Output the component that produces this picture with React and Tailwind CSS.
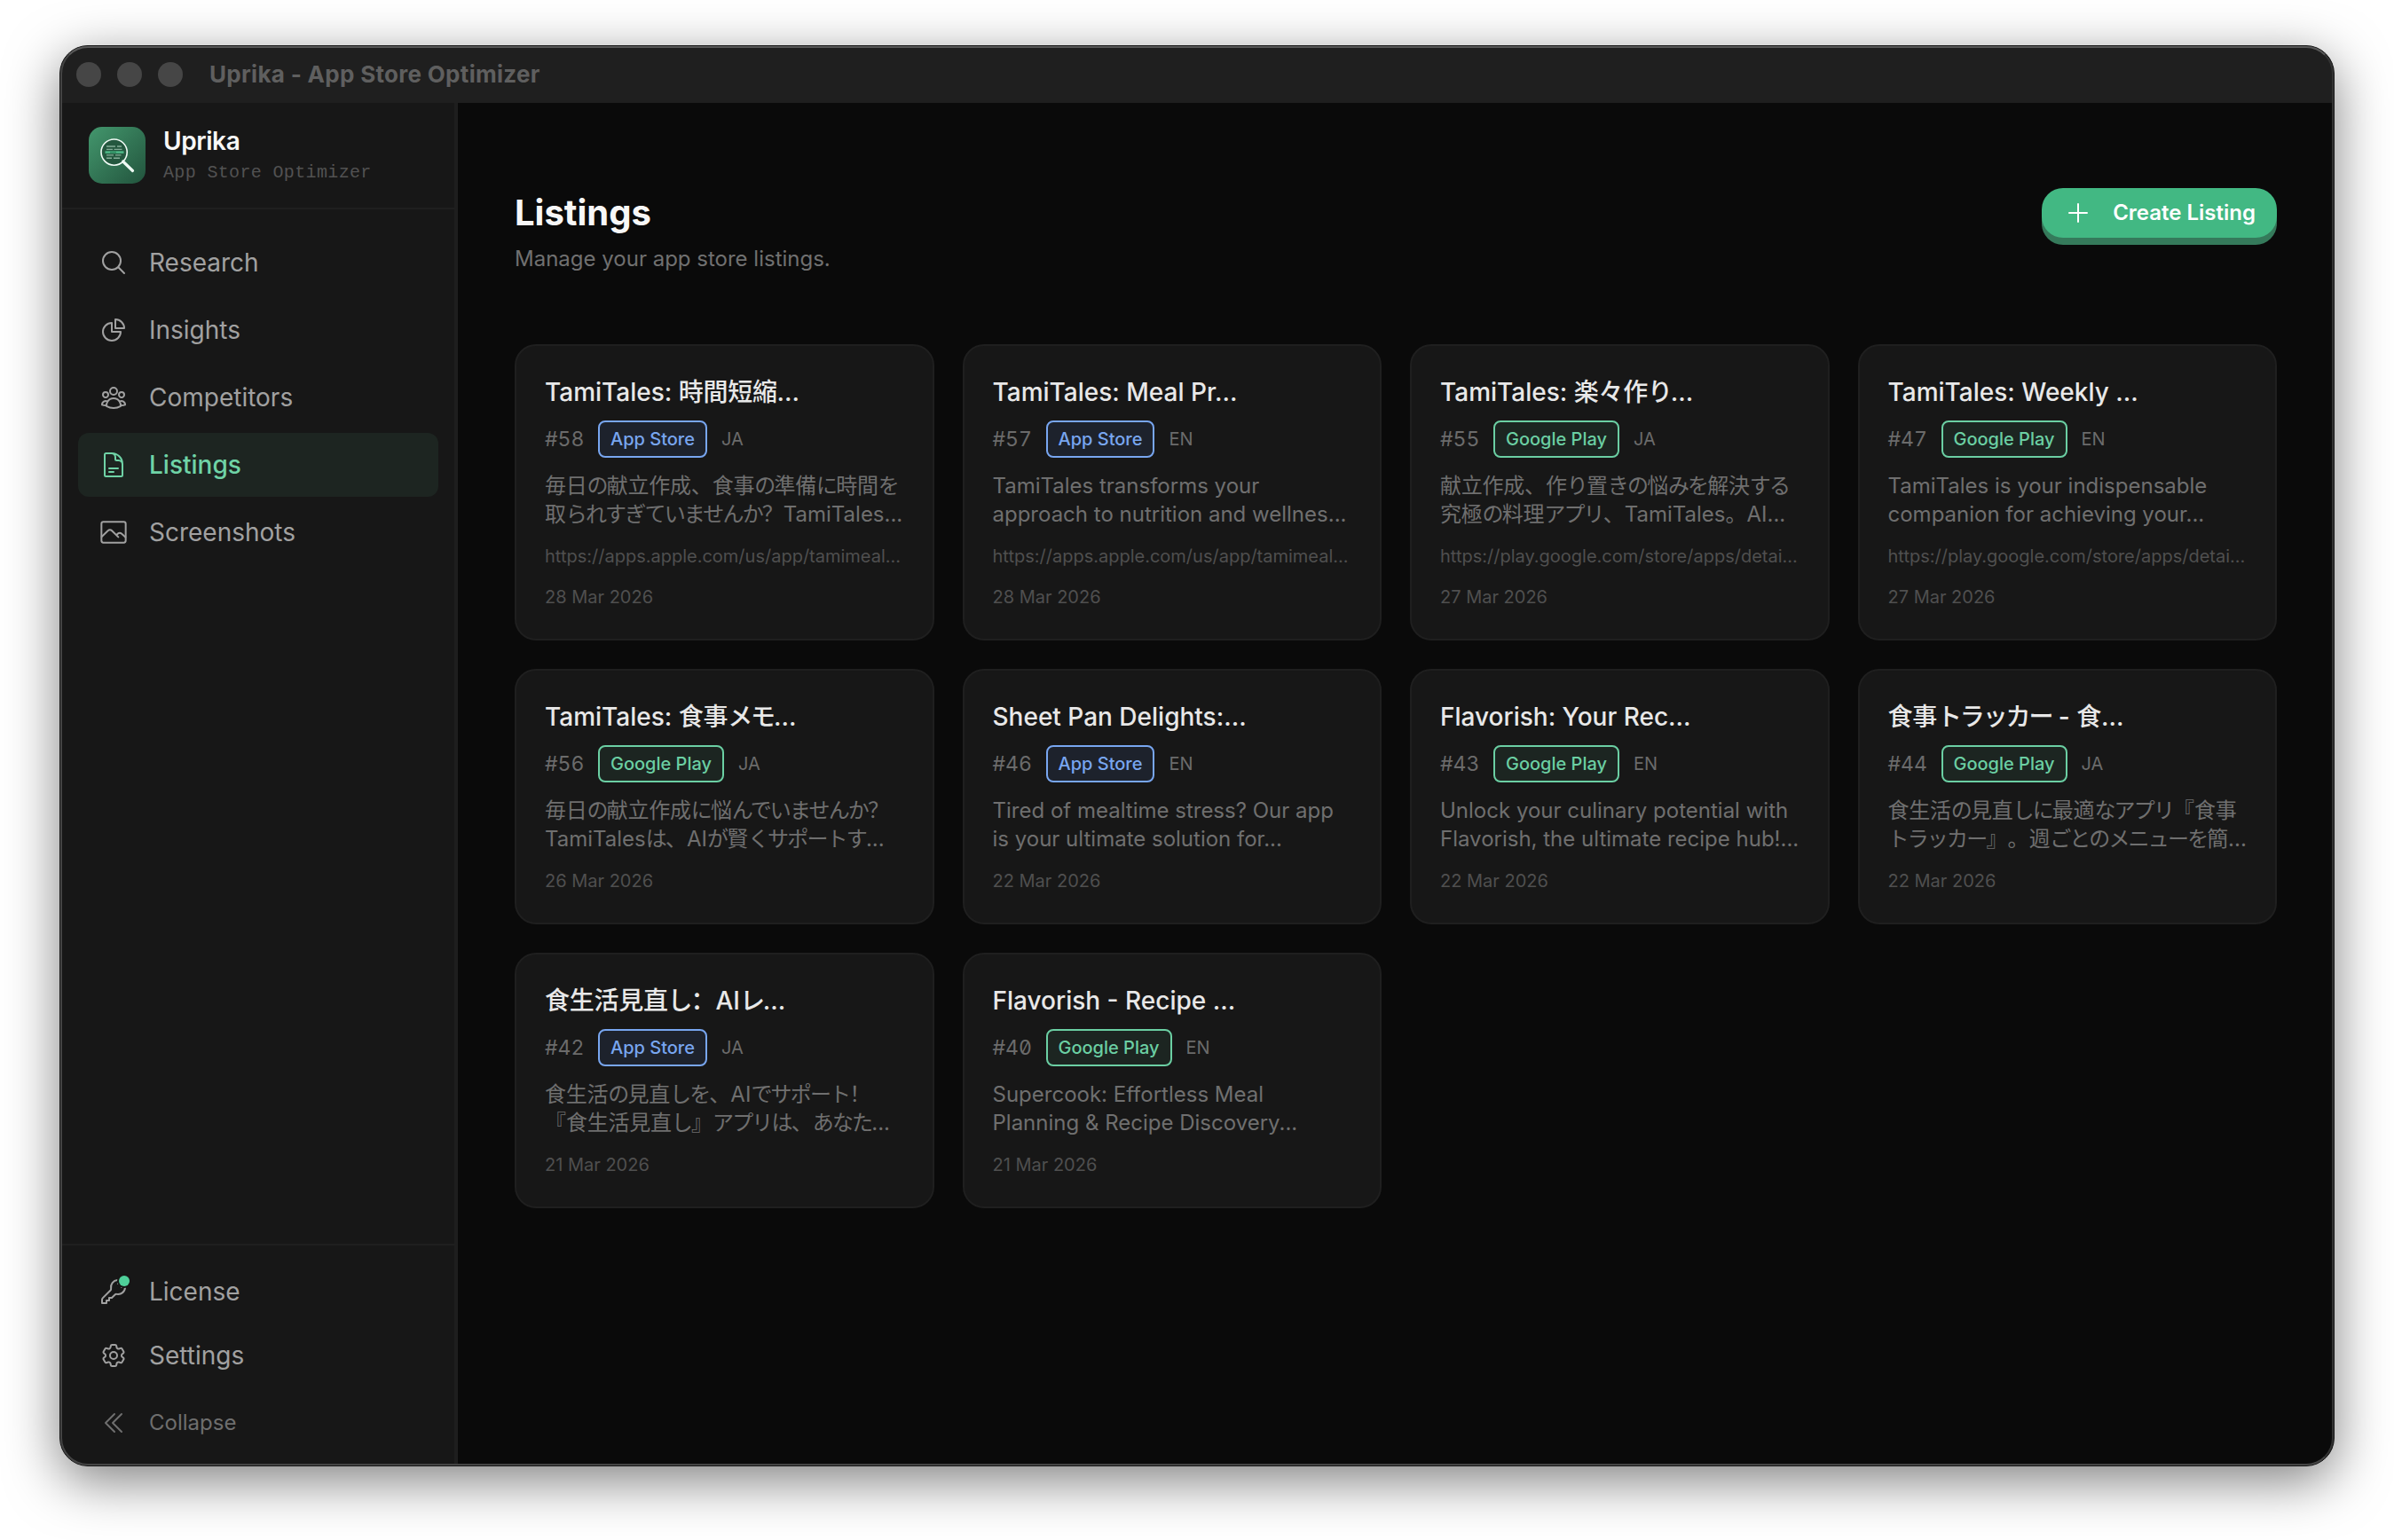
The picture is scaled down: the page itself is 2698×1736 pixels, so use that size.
import {
  HiOutlineMagnifyingGlass,
  HiOutlineChartPie,
  HiOutlineUserGroup,
  HiOutlineDocumentText,
  HiOutlineKey,
  HiOutlineCog6Tooth,
  HiOutlineChevronDoubleLeft,
  HiOutlinePlus,
} from "react-icons/hi2";

const RUNS = /[\u3041-\u3096\u30a1-\u30fc]+|[\u3400-\u9fff\u3005]+|[^\u3041-\u3096\u30a1-\u30fc\u3400-\u9fff\u3005]+/g;

/* Sets kana tighter than ideographs; other characters keep their natural spacing. */
function Text({ children }) {
  return children.match(RUNS).map((run, i) => {
    if (/^[\u3041-\u30fc]/.test(run)) {
      return (
        <span key={i} className="tracking-[-0.076em]">
          {run}
        </span>
      );
    }
    if (/^[\u3400-\u9fff\u3005]/.test(run)) {
      return (
        <span key={i} className="tracking-[-0.01em]">
          {run}
        </span>
      );
    }
    return run;
  });
}

function PhotoIcon({ className }) {
  return (
    <svg
      className={className}
      viewBox="0 0 24 24"
      fill="none"
      stroke="currentColor"
      strokeWidth="1.5"
      strokeLinecap="round"
      strokeLinejoin="round"
    >
      <rect x="1.75" y="3.25" width="20.5" height="17.5" rx="1.6" />
      <path d="m2 15.75 5.4-5.2a2.1 2.1 0 0 1 3 0l5.6 5.5m-1.6-1.6 1.3-1.3a2.1 2.1 0 0 1 3 0l3.3 3" />
    </svg>
  );
}

function Logo() {
  return (
    <svg className="size-16 shrink-0" viewBox="0 0 64 64" fill="none">
      <defs>
        <linearGradient id="logo-bg" x1="0" y1="0" x2="64" y2="64" gradientUnits="userSpaceOnUse">
          <stop stopColor="#43976d" />
          <stop offset="1" stopColor="#22543d" />
        </linearGradient>
      </defs>
      <rect width="64" height="64" rx="15" fill="url(#logo-bg)" />
      <circle cx="28.6" cy="28.6" r="14.6" fill="#24583f" stroke="#effaf4" strokeWidth="1.6" />
      <path d="M38.6 39 49.5 49.5" stroke="#effaf4" strokeWidth="3.2" strokeLinecap="round" />
      <g stroke="#84ad98" strokeWidth="1.4">
        <path d="M20 22h10M32 22h5M20 25.4h7M28.5 25.4h9M20 31.9h8M30 31.9h6.5M20 35.2h6M28 35.2h7" />
      </g>
      <path d="M18.5 28.6h21" stroke="#4bb383" strokeWidth="2.6" />
      <path d="M24 28.6h7" stroke="#2f8a60" strokeWidth="1.6" />
    </svg>
  );
}

const NAV = [
  { label: "Research", Icon: HiOutlineMagnifyingGlass },
  { label: "Insights", Icon: HiOutlineChartPie },
  { label: "Competitors", Icon: HiOutlineUserGroup },
  { label: "Listings", Icon: HiOutlineDocumentText, active: true },
  { label: "Screenshots", Icon: PhotoIcon },
];

const APPLE_URL = "https://apps.apple.com/us/app/tamimeal...";
const PLAY_URL = "https://play.google.com/store/apps/detai...";

const LISTINGS = [
  { title: "TamiTales: 時間短縮...", id: "#58", store: "App Store", lang: "JA", lines: ["毎日の献立作成、食事の準備に時間を", "取られすぎていませんか？TamiTales..."], url: APPLE_URL, date: "28 Mar 2026" },
  { title: "TamiTales: Meal Pr...", id: "#57", store: "App Store", lang: "EN", lines: ["TamiTales transforms your", "approach to nutrition and wellnes..."], url: APPLE_URL, date: "28 Mar 2026" },
  { title: "TamiTales: 楽々作り...", id: "#55", store: "Google Play", lang: "JA", lines: ["献立作成、作り置きの悩みを解決する", "究極の料理アプリ、TamiTales。AI..."], url: PLAY_URL, date: "27 Mar 2026" },
  { title: "TamiTales: Weekly ...", id: "#47", store: "Google Play", lang: "EN", lines: ["TamiTales is your indispensable", "companion for achieving your..."], url: PLAY_URL, date: "27 Mar 2026" },
  { title: "TamiTales: 食事メモ...", id: "#56", store: "Google Play", lang: "JA", lines: ["毎日の献立作成に悩んでいませんか？", "TamiTalesは、AIが賢くサポートす..."], date: "26 Mar 2026" },
  { title: "Sheet Pan Delights:...", id: "#46", store: "App Store", lang: "EN", lines: ["Tired of mealtime stress? Our app", "is your ultimate solution for..."], date: "22 Mar 2026" },
  { title: "Flavorish: Your Rec...", id: "#43", store: "Google Play", lang: "EN", lines: ["Unlock your culinary potential with", "Flavorish, the ultimate recipe hub!..."], date: "22 Mar 2026" },
  { title: "食事トラッカー - 食...", id: "#44", store: "Google Play", lang: "JA", lines: ["食生活の見直しに最適なアプリ『食事", "トラッカー』。週ごとのメニューを簡..."], date: "22 Mar 2026" },
  { title: "食生活見直し：AIレ...", id: "#42", store: "App Store", lang: "JA", lines: ["食生活の見直しを、AIでサポート！", "『食生活見直し』アプリは、あなた..."], date: "21 Mar 2026" },
  { title: "Flavorish - Recipe ...", id: "#40", store: "Google Play", lang: "EN", lines: ["Supercook: Effortless Meal", "Planning & Recipe Discovery..."], date: "21 Mar 2026" },
];

const BADGE = {
  "App Store": "border-[#78a6f0] bg-[#1d222c] text-[#78a6f0]",
  "Google Play": "border-[#6bcfa3] bg-[#1c2521] text-[#6bcfa3]",
};

function TitleBar() {
  return (
    <header className="flex h-16 shrink-0 items-center bg-[#1f1f1f] pl-[18px]">
      <div className="flex gap-[18px]">
        <span className="size-7 rounded-full bg-[#464646]" />
        <span className="size-7 rounded-full bg-[#464646]" />
        <span className="size-7 rounded-full bg-[#464646]" />
      </div>
      <span className="ml-[30px] pb-0.5 text-[26px] font-bold tracking-[0.3px] text-[#5f5f5f]">
        Uprika - App Store Optimizer
      </span>
    </header>
  );
}

function NavItem({ label, Icon, active, dot }) {
  return (
    <a
      className={
        "flex h-[72px] items-center gap-6 rounded-xl px-6 text-[28px] " +
        (active ? "bg-[#1d2521] font-medium text-[#6fd3a6]" : "text-[#a1a1a1]")
      }
    >
      <span className="relative size-8 shrink-0">
        <Icon className="size-8" />
        {dot && (
          <span className="absolute -top-0.5 -right-0.5 size-3 rounded-full bg-[#4fd09a] ring-2 ring-[#171717]" />
        )}
      </span>
      {label}
    </a>
  );
}

function Sidebar() {
  return (
    <aside className="flex w-[448px] shrink-0 flex-col border-r-4 border-[#1e1e1e] bg-[#171717]">
      <div className="flex h-[120px] shrink-0 items-center gap-5 border-b-2 border-[#1f1f1f] pl-8">
        <Logo />
        <div className="flex flex-col">
          <span className="text-[28px] leading-[38px] font-semibold tracking-[-0.015em] text-[#f7f7f7]">
            Uprika
          </span>
          <span className="pt-0.5 font-['Liberation_Mono',monospace] text-[20px] leading-[30px] tracking-[0.35px] text-[#525252]">
            App Store Optimizer
          </span>
        </div>
      </div>
      <nav className="flex flex-1 flex-col gap-1 pt-6 pr-[18px] pl-5">
        {NAV.map((item) => (
          <NavItem key={item.label} {...item} />
        ))}
      </nav>
      <div className="flex h-[250px] shrink-0 flex-col border-t-2 border-[#1f1f1f] pt-4 pr-[18px] pl-5">
        <NavItem label="License" Icon={HiOutlineKey} dot />
        <NavItem label="Settings" Icon={HiOutlineCog6Tooth} />
        <button className="mt-1 flex h-[72px] items-center gap-6 px-6 text-2xl text-[#6e6e6e]">
          <HiOutlineChevronDoubleLeft className="size-8" />
          Collapse
        </button>
      </div>
    </aside>
  );
}

function ListingCard({ title, id, store, lang, lines, url, date }) {
  return (
    <article className="flex flex-col rounded-3xl border-2 border-[#1f1f1f] bg-[#171717] p-8 whitespace-nowrap [text-spacing-trim:space-all]">
      <h2 className="text-[28px] leading-10 font-medium text-[#e8e8e8]">
        <Text>{title}</Text>
      </h2>
      <div className="mt-3 flex h-[42px] items-center gap-4 text-[20px] text-[#6b6b6b]">
        <span className="w-11 text-[23px] [font-feature-settings:'tnum','zero']">{id}</span>
        <span
          className={
            "flex h-full items-center rounded-lg border-2 px-3 font-medium " + BADGE[store]
          }
        >
          {store}
        </span>
        <span>{lang}</span>
      </div>
      <div className="mt-4 text-2xl leading-8 text-[#6f6f6f]">
        {lines.map((line) => (
          <p key={line}>
            <Text>{line}</Text>
          </p>
        ))}
      </div>
      {url && <p className="mt-4 text-[20px] leading-[30px] text-[#4f4f4f]">{url}</p>}
      <p className="mt-4 text-[20px] leading-[30px] text-[#4f4f4f]">{date}</p>
    </article>
  );
}

export default function App() {
  return (
    <div className="h-[1736px] w-[2698px] overflow-hidden bg-white pt-[51px] pl-[67px] font-['Inter','Noto_Sans_CJK_SC',sans-serif] text-white">
      <div className="relative h-[1602px] w-[2564px] rounded-[32px] shadow-[0_16px_60px_rgba(0,0,0,0.5)]">
        <div className="flex h-full flex-col overflow-hidden rounded-[32px] border border-[#161616] bg-[#0a0a0a]">
          <TitleBar />
          <div className="flex min-h-0 flex-1">
            <Sidebar />
            <main className="flex-1 bg-[#0a0a0a] pt-24 pr-16 pl-16">
              <div className="flex items-start justify-between">
                <div>
                  <h1 className="text-[40px] leading-[56px] font-bold text-[#f7f7f7]">Listings</h1>
                  <p className="mt-2 text-2xl leading-8 text-[#707070]">
                    Manage your app store listings.
                  </p>
                </div>
                <button className="flex h-14 items-center gap-[23px] rounded-3xl bg-[#42b883] pr-6 pl-[25px] text-2xl font-semibold whitespace-nowrap text-white shadow-[0_8px_0_#357a5b]">
                  <HiOutlinePlus className="size-8" />
                  Create Listing
                </button>
              </div>
              <div className="mt-20 grid grid-cols-4 gap-8">
                {LISTINGS.map((item) => (
                  <ListingCard key={item.id} {...item} />
                ))}
              </div>
            </main>
          </div>
        </div>
        <div className="pointer-events-none absolute inset-px rounded-[31px] border-2 border-t-[#585858] border-r-[#333333] border-b-[#444444] border-l-[#444444]" />
      </div>
    </div>
  );
}
